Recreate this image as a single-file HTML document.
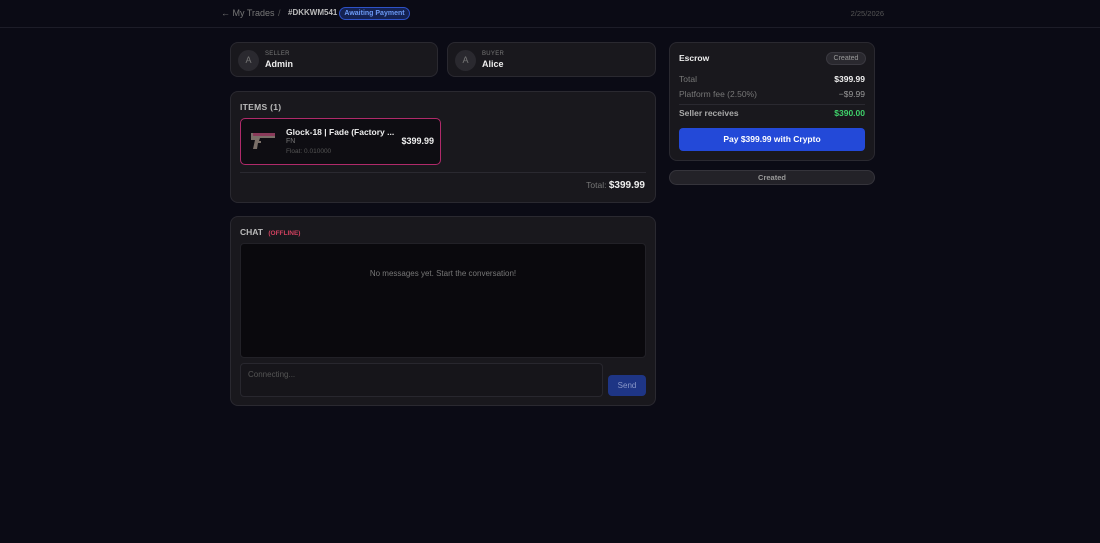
<!DOCTYPE html><html><head><style>
*{box-sizing:border-box;margin:0;padding:0}
body{width:1100px;height:543px;background:#0b0b15;font-family:"Liberation Sans",sans-serif;color:#e5e5e5;position:relative;overflow:hidden}
.a{position:absolute}
.card{position:absolute;background:#19181d;border:1px solid #2a2930;border-radius:8px}
.av{position:absolute;width:21px;height:21px;border-radius:50%;background:#2a292f;color:#777;font-size:9px;text-align:center;line-height:21px}
.lbl{font-size:6px;color:#777;letter-spacing:.3px}
.nm{font-size:9px;font-weight:bold;color:#eee}
</style></head><body>
<div class="a" style="left:0;top:27px;width:1100px;height:1px;background:#1d1d28"></div>
<div class="a" style="left:221px;top:8px;font-size:9px;color:#777">← My Trades</div>
<div class="a" style="left:278px;top:8px;font-size:9px;color:#555">/</div>
<div class="a" style="left:288px;top:8px;font-size:8px;color:#bbb;font-weight:bold">#DKKWM541</div>
<div class="a" style="left:339px;top:7px;width:71px;height:13px;border:1px solid #2e52c8;background:#142252;border-radius:7px;font-size:7px;color:#6c9af5;text-align:center;line-height:11px;font-weight:bold">Awaiting Payment</div>
<div class="a" style="right:216px;top:9px;font-size:7.5px;color:#555">2/25/2026</div>

<div class="card" style="left:230px;top:42px;width:208px;height:35px"><div class="av" style="left:7px;top:7px">A</div><div class="a lbl" style="left:34px;top:8px">SELLER</div><div class="a nm" style="left:34px;top:16px">Admin</div></div>
<div class="card" style="left:447px;top:42px;width:209px;height:35px"><div class="av" style="left:7px;top:7px">A</div><div class="a lbl" style="left:34px;top:8px">BUYER</div><div class="a nm" style="left:34px;top:16px">Alice</div></div>

<div class="card" style="left:230px;top:91px;width:426px;height:112px">
<div class="a" style="left:9px;top:10px;font-size:8.5px;color:#bbb;font-weight:bold;letter-spacing:.3px">ITEMS (1)</div>
<div class="a" style="left:9px;top:26px;width:201px;height:47px;border:1.5px solid #b02a6a;border-radius:5px;background:#0e0d12">
<svg class="a" style="left:9px;top:11px" width="28" height="22" viewBox="0 0 28 22"><path d="M1 3h24v5H10l-1 3h2v2H8l-1 6H3l2-9H1z" fill="#7a6f68"/><rect x="3" y="3" width="22" height="3" fill="#8a3a5a"/></svg>
<div class="a" style="left:45px;top:8px;font-size:8.5px;font-weight:bold;color:#eee">Glock-18 | Fade (Factory ...</div>
<div class="a" style="left:45px;top:19px;font-size:7px;color:#777">FN</div>
<div class="a" style="left:45px;top:29px;font-size:6.5px;color:#555">Float: 0.010000</div>
<div class="a" style="right:6px;top:17px;font-size:9px;font-weight:bold;color:#eee">$399.99</div>
</div>
<div class="a" style="left:9px;top:80px;width:406px;height:1px;background:#2a2930"></div>
<div class="a" style="right:10px;top:88px;font-size:8.5px;color:#777">Total: <b style="font-size:10px;color:#eee">$399.99</b></div>
</div>

<div class="card" style="left:230px;top:216px;width:426px;height:190px">
<div class="a" style="left:9px;top:10px;font-size:8.5px;color:#bbb;font-weight:bold">CHAT <span style="color:#d0415f;font-size:6.5px;margin-left:3px">(OFFLINE)</span></div>
<div class="a" style="left:9px;top:26px;width:406px;height:115px;background:#0a090d;border:1px solid #222127;border-radius:4px;font-size:8px;color:#777;text-align:center;padding-top:25px">No messages yet. Start the conversation!</div>
<div class="a" style="left:9px;top:146px;width:363px;height:34px;background:#16151a;border:1px solid #28272e;border-radius:4px;font-size:8px;color:#555;padding:6px 7px">Connecting...</div>
<div class="a" style="left:377px;top:158px;width:38px;height:21px;background:#1e3585;border-radius:4px;font-size:8px;color:#8a98c8;text-align:center;line-height:21px">Send</div>
</div>

<div class="card" style="left:669px;top:42px;width:206px;height:119px">
<div class="a" style="left:9px;top:10px;font-size:8.5px;font-weight:bold;color:#eee">Escrow</div>
<div class="a" style="left:156px;top:9px;width:40px;height:13px;background:#2a292f;border:1px solid #3a3940;border-radius:7px;font-size:7px;color:#999;text-align:center;line-height:11px">Created</div>
<div class="a" style="left:9px;top:31px;font-size:8.5px;color:#777">Total</div>
<div class="a" style="right:9px;top:31px;font-size:8.5px;font-weight:bold;color:#eee">$399.99</div>
<div class="a" style="left:9px;top:46px;font-size:8.5px;color:#777">Platform fee (2.50%)</div>
<div class="a" style="right:9px;top:46px;font-size:8.5px;color:#999">−$9.99</div>
<div class="a" style="left:9px;top:61px;width:186px;height:1px;background:#2a2930"></div>
<div class="a" style="left:9px;top:65px;font-size:8.5px;font-weight:bold;color:#aaa">Seller receives</div>
<div class="a" style="right:9px;top:65px;font-size:8.5px;font-weight:bold;color:#3fd16a">$390.00</div>
<div class="a" style="left:9px;top:85px;width:186px;height:23px;background:#2349d8;border-radius:4px;font-size:8.5px;font-weight:bold;color:#fff;text-align:center;line-height:23px">Pay $399.99 with Crypto</div>
</div>
<div class="a" style="left:669px;top:170px;width:206px;height:15px;background:#232228;border:1px solid #35343b;border-radius:8px;font-size:7.5px;color:#999;text-align:center;line-height:13px;font-weight:bold">Created</div>
</body></html>
